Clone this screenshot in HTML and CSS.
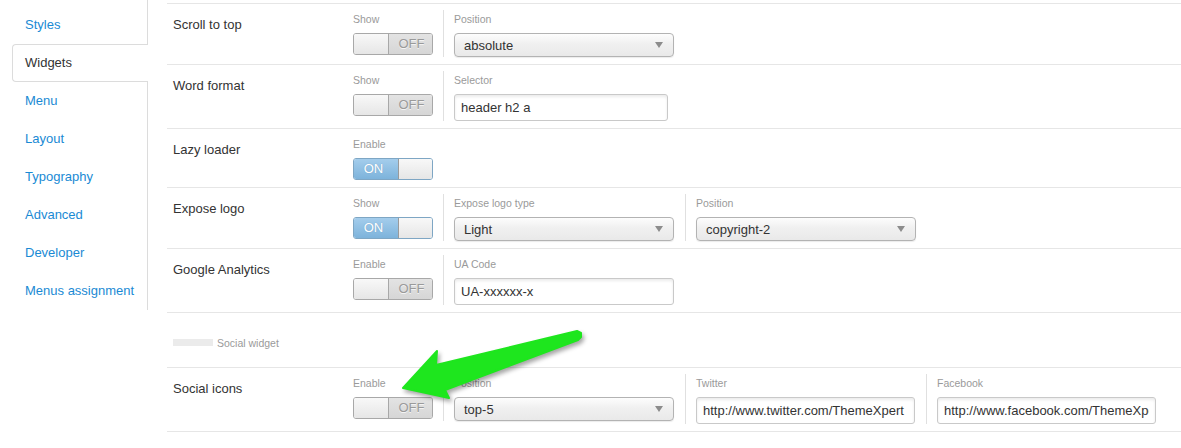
FILE: index.html
```html
<!DOCTYPE html>
<html>
<head>
<meta charset="utf-8">
<title>Widgets</title>
<link rel="stylesheet" href="styles.css">
</head>
<body>
<div class="page">
  <nav class="sidebar">
    <a class="tab">Styles</a>
    <a class="tab active">Widgets</a>
    <a class="tab">Menu</a>
    <a class="tab">Layout</a>
    <a class="tab">Typography</a>
    <a class="tab">Advanced</a>
    <a class="tab">Developer</a>
    <a class="tab">Menus assignment</a>
  </nav>

  <main class="content">
    <div class="row">
      <div class="row-label">Scroll to top</div>
      <div class="fields">
        <div class="field field-toggle">
          <div class="field-label">Show</div>
          <div class="toggle off"><span class="knob"></span><span class="state">OFF</span></div>
        </div>
        <div class="field">
          <div class="field-label">Position</div>
          <div class="select w220"><span class="value">absolute</span><span class="caret"></span></div>
        </div>
      </div>
    </div>

    <div class="row">
      <div class="row-label">Word format</div>
      <div class="fields">
        <div class="field field-toggle">
          <div class="field-label">Show</div>
          <div class="toggle off"><span class="knob"></span><span class="state">OFF</span></div>
        </div>
        <div class="field">
          <div class="field-label">Selector</div>
          <input class="text w214" type="text" value="header h2 a">
        </div>
      </div>
    </div>

    <div class="row">
      <div class="row-label">Lazy loader</div>
      <div class="fields">
        <div class="field field-toggle">
          <div class="field-label">Enable</div>
          <div class="toggle on"><span class="state">ON</span><span class="knob"></span></div>
        </div>
      </div>
    </div>

    <div class="row">
      <div class="row-label">Expose logo</div>
      <div class="fields">
        <div class="field field-toggle">
          <div class="field-label">Show</div>
          <div class="toggle on"><span class="state">ON</span><span class="knob"></span></div>
        </div>
        <div class="field">
          <div class="field-label">Expose logo type</div>
          <div class="select w220"><span class="value">Light</span><span class="caret"></span></div>
        </div>
        <div class="field">
          <div class="field-label">Position</div>
          <div class="select w220"><span class="value">copyright-2</span><span class="caret"></span></div>
        </div>
      </div>
    </div>

    <div class="row">
      <div class="row-label">Google Analytics</div>
      <div class="fields">
        <div class="field field-toggle">
          <div class="field-label">Enable</div>
          <div class="toggle off"><span class="knob"></span><span class="state">OFF</span></div>
        </div>
        <div class="field">
          <div class="field-label">UA Code</div>
          <input class="text w220" type="text" value="UA-xxxxxx-x">
        </div>
      </div>
    </div>

    <div class="row section">
      <span class="section-bar"></span>
      <span class="section-title">Social widget</span>
    </div>

    <div class="row last">
      <div class="row-label">Social icons</div>
      <div class="fields">
        <div class="field field-toggle">
          <div class="field-label">Enable</div>
          <div class="toggle off"><span class="knob"></span><span class="state">OFF</span></div>
        </div>
        <div class="field">
          <div class="field-label">Position</div>
          <div class="select w220"><span class="value">top-5</span><span class="caret"></span></div>
        </div>
        <div class="field">
          <div class="field-label">Twitter</div>
          <input class="text w219" type="text" value="http://www.twitter.com/ThemeXpert">
        </div>
        <div class="field">
          <div class="field-label">Facebook</div>
          <input class="text w219" type="text" value="http://www.facebook.com/ThemeXpert">
        </div>
      </div>
    </div>
  </main>

  <svg class="arrow" width="1181" height="448" viewBox="0 0 1181 448" xmlns="http://www.w3.org/2000/svg">
    <polygon points="403,388 437,351 436,365 577,331 581,333 581,337 578,340 445,390 449,398" fill="#1ee61e" stroke="#1ee61e" stroke-width="2" stroke-linejoin="round"/>
  </svg>
</div>
</body>
</html>
```

FILE: styles.css
```css
html, body {
  margin: 0;
  padding: 0;
  background: #fff;
}

body {
  font-family: "Liberation Sans", Arial, sans-serif;
  font-size: 13px;
  color: #333;
  width: 1181px;
  height: 448px;
  overflow: hidden;
}

.page {
  position: relative;
  display: flex;
  align-items: flex-start;
}

/* Sidebar */
.sidebar {
  width: 148px;
  box-sizing: border-box;
  border-right: 1px solid #dcdcdc;
  padding: 6px 0 0;
  display: flex;
  flex-direction: column;
  flex-shrink: 0;
}

.tab {
  display: block;
  margin-left: 12px;
  padding-left: 12px;
  height: 36px;
  line-height: 36px;
  border: 1px solid transparent;
  border-right: 0;
  color: #1a8ad4;
  font-size: 13px;
  text-decoration: none;
}

.tab.active {
  color: #333;
  background: #fff;
  border-color: #dcdcdc;
  border-radius: 4px 0 0 4px;
  margin-right: -1px;
}

/* Content */
.content {
  flex: 1;
  margin-left: 19px;
  padding-top: 3px;
}

.row {
  display: flex;
  align-items: flex-start;
  border-top: 1px solid #e6e6e6;
  padding: 6px 0 7px;
}

.row.last {
  border-bottom: 1px solid #e6e6e6;
}

.row-label {
  width: 186px;
  box-sizing: border-box;
  padding: 7px 0 0 6px;
  line-height: 16px;
  font-size: 13px;
  color: #333;
  flex-shrink: 0;
}

.fields {
  display: flex;
  align-items: flex-start;
}

.field {
  padding: 3px 11px 0 10px;
  border-left: 1px solid #e0e0e0;
}

.field.field-toggle {
  border-left: 0;
  padding-left: 0;
  padding-right: 10px;
}

.field-label {
  font-size: 10.5px;
  line-height: 13px;
  color: #9a9a9a;
  margin-bottom: 7px;
  white-space: nowrap;
}

/* Toggle */
.toggle {
  width: 80px;
  height: 22px;
  box-sizing: border-box;
  border: 1px solid #a8a8a8;
  border-radius: 3px;
  display: flex;
  overflow: hidden;
  font-size: 13px;
  line-height: 20px;
}

.toggle .knob {
  width: 34px;
  background: linear-gradient(#f8f8f8, #e6e6e6);
}

.toggle.off .knob {
  border-right: 1px solid #a8a8a8;
}

.toggle.off .state {
  flex: 1;
  background: linear-gradient(#e3e3e3, #d6d6d6);
  color: #9a9a9a;
  text-align: center;
  text-shadow: 0 1px 0 #f4f4f4;
  padding-left: 2px;
}

.toggle.on {
  border-color: #7ea6c4;
}

.toggle.on .state {
  width: 44px;
  background: linear-gradient(#a4cdec, #7db3db);
  color: #fff;
  text-align: center;
  padding-right: 5px;
  box-sizing: border-box;
  text-shadow: 0 0 1px #6c9dc2;
}

.toggle.on .knob {
  flex: 1;
  border-left: 1px solid #9a9a9a;
}

/* Select */
.select {
  height: 24px;
  box-sizing: border-box;
  border: 1px solid #b3b3b3;
  border-radius: 4px;
  background: linear-gradient(#fdfdfd 0%, #f0f0f0 45%, #e9e9e9 100%);
  box-shadow: 0 1px 1px rgba(0, 0, 0, 0.08);
  display: flex;
  align-items: center;
  justify-content: space-between;
  padding: 0 10px 0 9px;
  font-size: 13px;
  color: #333;
}

.caret {
  width: 0;
  height: 0;
  border-left: 4px solid transparent;
  border-right: 4px solid transparent;
  border-top: 6px solid #8c8c8c;
}

.w220 { width: 220px; }
.w219 { width: 219px; }
.w214 { width: 214px; }

/* Text input */
.text {
  display: block;
  height: 27px;
  box-sizing: border-box;
  margin: 0;
  border: 1px solid #c9c9c9;
  border-radius: 3px;
  background: #fff;
  box-shadow: inset 0 2px 3px rgba(0, 0, 0, 0.08);
  padding: 0 6px;
  font-family: "Liberation Sans", Arial, sans-serif;
  font-size: 13px;
  color: #333;
  outline: none;
}

/* Section heading */
.row.section {
  height: 49px;
  padding: 5px 0 0 6px;
  align-items: center;
}

.section-bar {
  width: 40px;
  height: 7px;
  background: #ebebeb;
  margin-right: 4px;
}

.section-title {
  font-size: 10.5px;
  color: #9a9a9a;
}

/* Annotation arrow overlay */
.arrow {
  position: absolute;
  left: 0;
  top: 0;
  pointer-events: none;
  filter: drop-shadow(2px 3px 2px rgba(0, 0, 0, 0.35));
}
```
